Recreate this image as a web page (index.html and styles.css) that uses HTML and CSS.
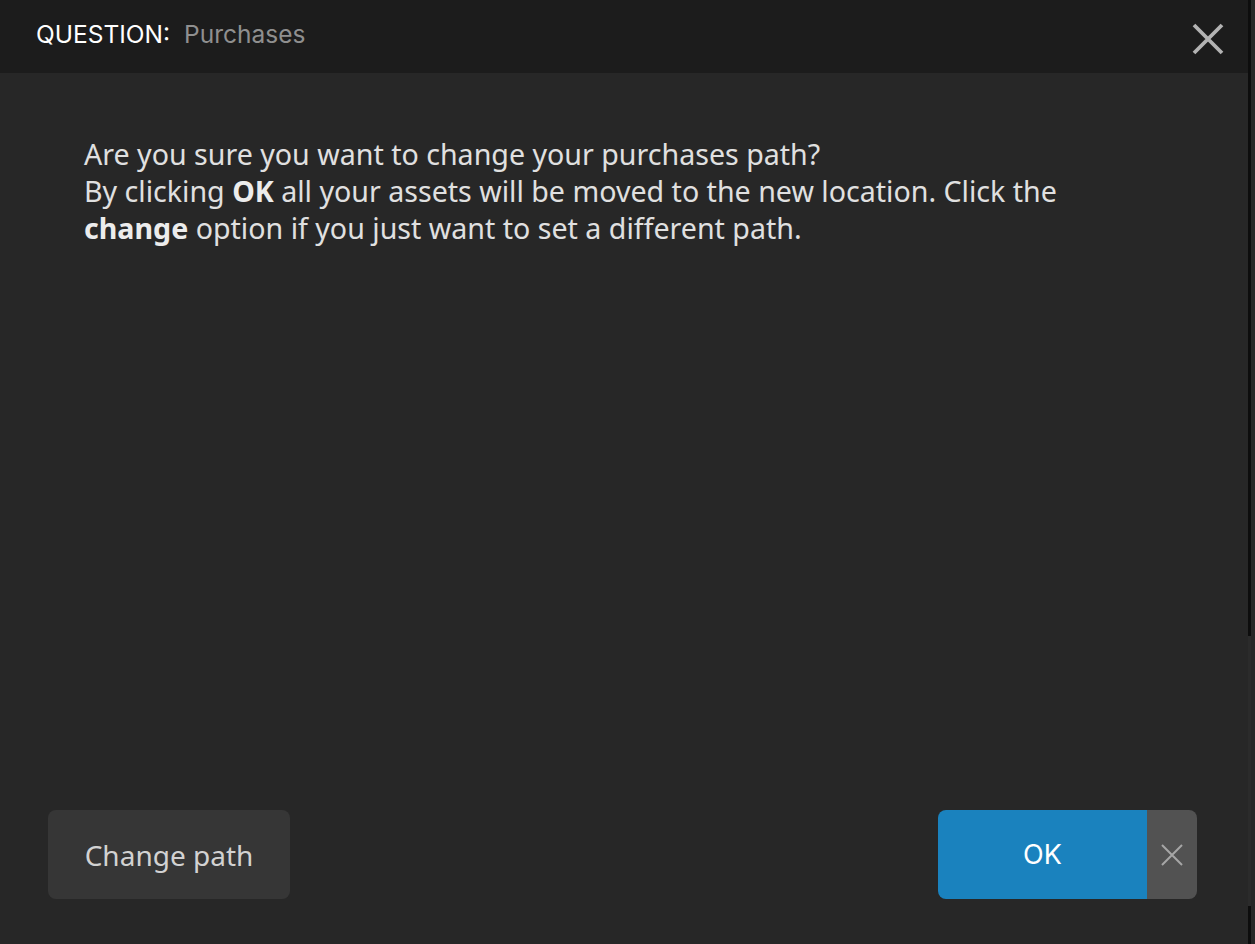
FILE: index.html
```html
<!DOCTYPE html>
<html lang="en">
<head>
    <meta charset="UTF-8">
    <title>Question: Purchases</title>
    <link rel="stylesheet" href="styles.css">
</head>
<body>
    <div class="dialog">
        <div class="header">
            <div class="title"><span class="label">QUESTION:</span><span class="name">Purchases</span></div>
            <button class="close" title="Close">
                <svg width="32" height="32" viewBox="0 0 32 32">
                    <path d="M2 2 L30 30 M30 2 L2 30" stroke="#b3b3b3" stroke-width="3.8"/>
                </svg>
            </button>
        </div>

        <div class="content">
            <p>Are you sure you want to change your purchases path?<br>
            By clicking <b>OK</b> all your assets will be moved to the new location. Click the <b>change</b> option if you just want to set a different path.</p>
        </div>

        <div class="footer">
            <button class="btn-secondary">Change path</button>
            <div class="split">
                <button class="btn-ok">OK</button>
                <button class="btn-cancel" title="Cancel">
                    <svg width="22" height="22" viewBox="0 0 22 22">
                        <path d="M1 1 L21 21 M21 1 L1 21" stroke="#a6a6a6" stroke-width="2"/>
                    </svg>
                </button>
            </div>
        </div>
    </div>

    <div class="scroll">
        <div class="thumb-top"></div>
        <div class="track"></div>
        <div class="thumb-bottom"></div>
    </div>
    <div class="edge"></div>
</body>
</html>
```

FILE: styles.css
```css
html, body {
    height: 100%;
}
body {
    margin: 0;
    display: flex;
    background: #272727;
    font-family: 'Noto Sans', 'Open Sans', sans-serif;
    color: #e0e0e0;
    overflow: hidden;
}
button {
    font-family: inherit;
    border: none;
    cursor: pointer;
}
.dialog {
    width: 1248px;
    display: flex;
    flex-direction: column;
    background: #272727;
}
.header {
    height: 73px;
    background: #1c1c1c;
    display: flex;
    align-items: center;
    justify-content: space-between;
    padding: 0 24px 0 36px;
    box-sizing: border-box;
}
.title {
    font-family: 'Inter', 'Liberation Sans', sans-serif;
    font-size: 24.5px;
    margin-top: -5px;
}
.label {
    color: #ffffff;
    margin-right: 14px;
}
.name {
    color: #8f8f8f;
}
.close {
    background: none;
    padding: 0;
    width: 32px;
    height: 32px;
    margin-top: 4px;
}
.content {
    flex: 1;
    padding: 0 84px;
}
.content p {
    margin: 62px 0 0 0;
    font-size: 28.6px;
    line-height: 37px;
    max-width: 1000px;
}
.content b {
    color: #ececec;
}
.footer {
    display: flex;
    justify-content: space-between;
    align-items: center;
    padding: 0 51px 45px 48px;
}
.btn-secondary {
    width: 242px;
    height: 89px;
    border-radius: 8px;
    background: #363636;
    color: #d2d2d2;
    font-size: 28px;
    padding: 0;
}
.split {
    display: flex;
    height: 89px;
    border-radius: 8px;
    overflow: hidden;
}
.btn-ok {
    width: 209px;
    background: #1a82be;
    color: #ffffff;
    font-family: 'Inter', 'Liberation Sans', sans-serif;
    font-size: 27px;
    padding: 0;
}
.btn-cancel {
    width: 50px;
    background: #525252;
    padding: 0;
    display: flex;
    align-items: center;
    justify-content: center;
}
.scroll {
    width: 3px;
    display: flex;
    flex-direction: column;
}
.thumb-top {
    height: 636px;
    background: #0d0d0d;
}
.track {
    height: 270px;
    background: #2b2b2b;
}
.thumb-bottom {
    flex: 1;
    background: #0d0d0d;
}
.edge {
    flex: 1;
    background: #272727;
}
```
